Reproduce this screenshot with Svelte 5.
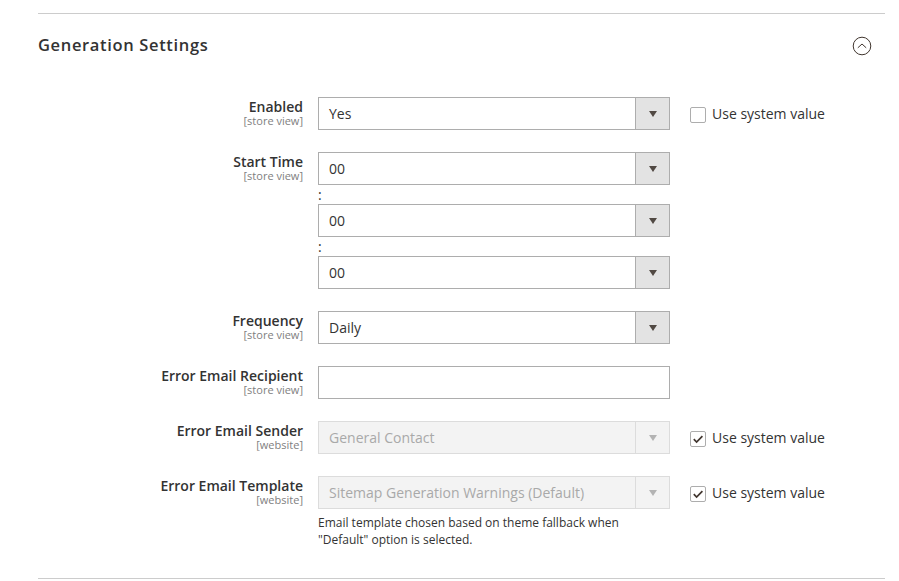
<script>
  const rows = [
    { label: 'Enabled', scope: 'store view', selects: ['Yes'], inherit: false },
    { label: 'Start Time', scope: 'store view', selects: ['00', '00', '00'] },
    { label: 'Frequency', scope: 'store view', selects: ['Daily'] },
    { label: 'Error Email Recipient', scope: 'store view', input: true },
    { label: 'Error Email Sender', scope: 'website', selects: ['General Contact'], disabled: true, inherit: true },
    {
      label: 'Error Email Template',
      scope: 'website',
      selects: ['Sitemap Generation Warnings (Default)'],
      disabled: true,
      inherit: true,
      note: 'Email template chosen based on theme fallback when "Default" option is selected.'
    }
  ];
</script>

<div class="section">
  <div class="head">
    <h2>Generation Settings</h2>
    <svg class="toggle" width="20" height="20" viewBox="0 0 20 20" fill="none" stroke="#41362f">
      <circle cx="10" cy="10" r="8.8" stroke-width="1" />
      <path d="M5.8 11.8 10 8l4.2 3.8" stroke-width="1" />
    </svg>
  </div>

  <div class="rows">
    {#each rows as row}
      <div class="row">
        <div class="label">
          <span class="name">{row.label}</span>
          <span class="scope">[{row.scope}]</span>
        </div>
        <div class="control">
          {#if row.input}
            <div class="input"></div>
          {:else}
            {#each row.selects as value, i}
              {#if i > 0}<div class="sep">:</div>{/if}
              <div class="select" class:disabled={row.disabled}>
                <span class="value">{value}</span>
                <span class="arrow"><i></i></span>
              </div>
            {/each}
          {/if}
          {#if row.note}<p class="note">{row.note}</p>{/if}
        </div>
        {#if row.inherit !== undefined}
          <div class="inherit">
            <span class="check">
              {#if row.inherit}
                <svg width="14" height="14" viewBox="0 0 14 14" fill="none" stroke="#41362f" stroke-width="1.7">
                  <path d="M2.8 7.2 5.6 10 11.4 4.2" />
                </svg>
              {/if}
            </span>
            <span>Use system value</span>
          </div>
        {/if}
      </div>
    {/each}
  </div>
</div>

<style>
  :global(body) {
    background: #fff;
  }
  .section {
    box-sizing: border-box;
    width: 847px;
    height: 566px;
    margin: 13px 0 0 38px;
    border-top: 1px solid #cccccc;
    border-bottom: 1px solid #cccccc;
    font-family: 'Open Sans', sans-serif;
    color: #333;
  }
  .head {
    display: flex;
    justify-content: space-between;
    align-items: center;
    height: 62px;
    padding-right: 13px;
  }
  h2 {
    margin: 0;
    font-size: 16.5px;
    font-weight: 600;
    letter-spacing: 0.65px;
    color: #333;
    position: relative;
    top: -1px;
  }
  .toggle {
    position: relative;
    top: 1px;
  }
  .rows {
    display: flex;
    flex-direction: column;
    gap: 22px;
    padding-top: 21px;
  }
  .row {
    display: flex;
    align-items: flex-start;
  }
  .label {
    width: 265px;
    text-align: right;
    display: flex;
    flex-direction: column;
    padding-top: 1px;
  }
  .name {
    font-size: 14px;
    font-weight: 600;
    line-height: 17px;
    color: #333;
  }
  .scope {
    font-size: 11px;
    line-height: 12px;
    color: #808080;
  }
  .control {
    width: 352px;
    margin-left: 15px;
  }
  .select,
  .input {
    box-sizing: border-box;
    height: 33px;
    border: 1px solid #adadad;
    background: #fff;
  }
  .select {
    display: flex;
    align-items: center;
    justify-content: space-between;
    font-size: 14px;
    color: #333;
  }
  .value {
    padding-left: 10px;
  }
  .arrow {
    box-sizing: border-box;
    width: 34px;
    height: 31px;
    border-left: 1px solid #adadad;
    background: #e3e3e3;
    display: flex;
    align-items: center;
    justify-content: center;
  }
  .arrow i {
    width: 0;
    height: 0;
    border-left: 4px solid transparent;
    border-right: 4px solid transparent;
    border-top: 6px solid #514943;
  }
  .select.disabled {
    background: #f3f3f3;
    border-color: #dcdcdc;
    color: #a9a9a9;
  }
  .select.disabled .arrow {
    background: #f3f3f3;
    border-left-color: #dcdcdc;
  }
  .select.disabled .arrow i {
    border-top-color: #b3b3b3;
  }
  .sep {
    height: 19px;
    font-size: 14px;
    line-height: 19px;
    color: #333;
  }
  .note {
    margin: 6px 0 0;
    font-size: 12px;
    line-height: 16.5px;
    color: #333;
  }
  .inherit {
    display: flex;
    align-items: center;
    gap: 6px;
    margin-left: 20px;
    height: 33px;
    font-size: 14px;
    color: #333;
  }
  .check {
    box-sizing: border-box;
    width: 16px;
    height: 16px;
    border: 1px solid #adadad;
    border-radius: 2px;
    background: #fff;
    display: flex;
    align-items: center;
    justify-content: center;
    position: relative;
    top: 1px;
  }
</style>
